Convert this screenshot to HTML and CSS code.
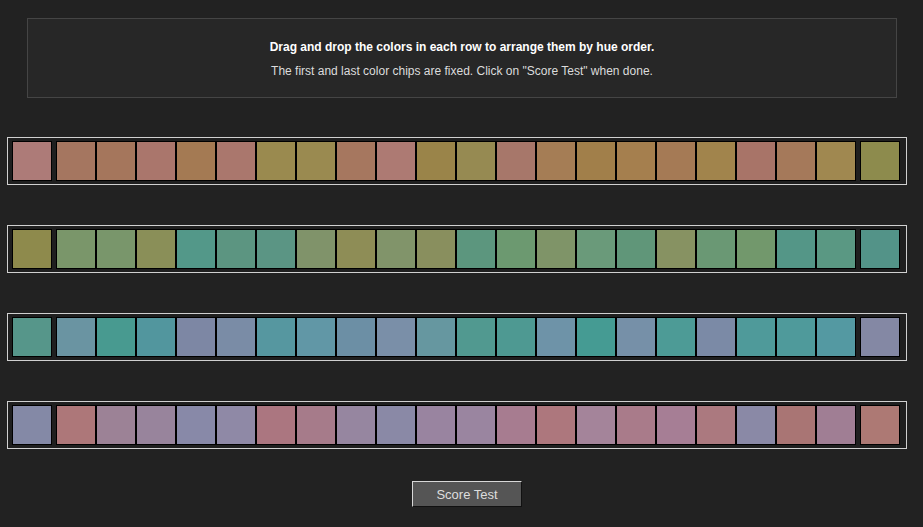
FILE: index.html
```html
<!DOCTYPE html>
<html>
<head>
<meta charset="utf-8">
<title>Hue Test</title>
<link rel="stylesheet" href="styles.css">
</head>
<body>
<div class="intro">
  <p class="lead">Drag and drop the colors in each row to arrange them by hue order.</p>
  <p class="sub">The first and last color chips are fixed. Click on "Score Test" when done.</p>
</div>
<div class="rows">
  <div class="row">
    <div class="chip" style="background:#ad7b78"></div>
    <div class="track">
      <div class="chip" style="background:#a57660"></div>
      <div class="chip" style="background:#a5765c"></div>
      <div class="chip" style="background:#aa766c"></div>
      <div class="chip" style="background:#a47a53"></div>
      <div class="chip" style="background:#aa776d"></div>
      <div class="chip" style="background:#9a8a4f"></div>
      <div class="chip" style="background:#9a8a50"></div>
      <div class="chip" style="background:#a6775f"></div>
      <div class="chip" style="background:#ad7a73"></div>
      <div class="chip" style="background:#9a8449"></div>
      <div class="chip" style="background:#968a52"></div>
      <div class="chip" style="background:#a7776a"></div>
      <div class="chip" style="background:#a57d55"></div>
      <div class="chip" style="background:#a17f4a"></div>
      <div class="chip" style="background:#a57f4e"></div>
      <div class="chip" style="background:#a57a55"></div>
      <div class="chip" style="background:#a1844c"></div>
      <div class="chip" style="background:#a87468"></div>
      <div class="chip" style="background:#a5795a"></div>
      <div class="chip" style="background:#a08850"></div>
    </div>
    <div class="chip" style="background:#8d8b4d"></div>
  </div>
  <div class="row">
    <div class="chip" style="background:#8e8a4c"></div>
    <div class="track">
      <div class="chip" style="background:#7a966a"></div>
      <div class="chip" style="background:#79966b"></div>
      <div class="chip" style="background:#8a8f58"></div>
      <div class="chip" style="background:#539889"></div>
      <div class="chip" style="background:#5c9581"></div>
      <div class="chip" style="background:#5b9584"></div>
      <div class="chip" style="background:#80936a"></div>
      <div class="chip" style="background:#8e8d56"></div>
      <div class="chip" style="background:#81946a"></div>
      <div class="chip" style="background:#898f5e"></div>
      <div class="chip" style="background:#5c967e"></div>
      <div class="chip" style="background:#6c9970"></div>
      <div class="chip" style="background:#7f9468"></div>
      <div class="chip" style="background:#6a9a7a"></div>
      <div class="chip" style="background:#609679"></div>
      <div class="chip" style="background:#879262"></div>
      <div class="chip" style="background:#6a9874"></div>
      <div class="chip" style="background:#72986c"></div>
      <div class="chip" style="background:#549687"></div>
      <div class="chip" style="background:#5a9883"></div>
    </div>
    <div class="chip" style="background:#539388"></div>
  </div>
  <div class="row">
    <div class="chip" style="background:#56968a"></div>
    <div class="track">
      <div class="chip" style="background:#6a94a2"></div>
      <div class="chip" style="background:#489a90"></div>
      <div class="chip" style="background:#52969e"></div>
      <div class="chip" style="background:#7d87a4"></div>
      <div class="chip" style="background:#7a8ca6"></div>
      <div class="chip" style="background:#5697a0"></div>
      <div class="chip" style="background:#6197a6"></div>
      <div class="chip" style="background:#6c8fa5"></div>
      <div class="chip" style="background:#7a8fa8"></div>
      <div class="chip" style="background:#6697a0"></div>
      <div class="chip" style="background:#519990"></div>
      <div class="chip" style="background:#4e9992"></div>
      <div class="chip" style="background:#6e93a8"></div>
      <div class="chip" style="background:#459b93"></div>
      <div class="chip" style="background:#7690a8"></div>
      <div class="chip" style="background:#4d9b96"></div>
      <div class="chip" style="background:#7b8aa6"></div>
      <div class="chip" style="background:#4f9a9a"></div>
      <div class="chip" style="background:#4f9a9b"></div>
      <div class="chip" style="background:#5499a2"></div>
    </div>
    <div class="chip" style="background:#8488a4"></div>
  </div>
  <div class="row">
    <div class="chip" style="background:#8489a6"></div>
    <div class="track">
      <div class="chip" style="background:#ad7779"></div>
      <div class="chip" style="background:#9c8296"></div>
      <div class="chip" style="background:#98849c"></div>
      <div class="chip" style="background:#8889a8"></div>
      <div class="chip" style="background:#8f89a6"></div>
      <div class="chip" style="background:#ab7680"></div>
      <div class="chip" style="background:#a67b8a"></div>
      <div class="chip" style="background:#9686a0"></div>
      <div class="chip" style="background:#8a89a6"></div>
      <div class="chip" style="background:#9984a0"></div>
      <div class="chip" style="background:#9a85a0"></div>
      <div class="chip" style="background:#a77c90"></div>
      <div class="chip" style="background:#ad777d"></div>
      <div class="chip" style="background:#a4849a"></div>
      <div class="chip" style="background:#a97b8a"></div>
      <div class="chip" style="background:#a67e95"></div>
      <div class="chip" style="background:#ab797f"></div>
      <div class="chip" style="background:#8a89a6"></div>
      <div class="chip" style="background:#a97574"></div>
      <div class="chip" style="background:#a07e94"></div>
    </div>
    <div class="chip" style="background:#ad7974"></div>
  </div>
</div>
<div class="actions">
  <button class="score-btn" type="button">Score Test</button>
</div>
</body>
</html>
```

FILE: styles.css
```css
html, body {
  margin: 0;
  background: #222222;
}
body {
  padding-top: 18px;
  font-family: "Liberation Sans", Arial, sans-serif;
  font-size: 12px;
}
.intro {
  margin-left: 27px;
  width: 870px;
  height: 80px;
  box-sizing: border-box;
  border: 1px solid #454545;
  background: #272727;
  padding-top: 16px;
  text-align: center;
}
.intro p {
  margin: 0;
  line-height: 24px;
}
.lead {
  font-weight: bold;
  color: #ffffff;
}
.sub {
  color: #dcdcdc;
}
.rows {
  margin: 39px 0 0 7px;
  width: 900px;
  display: flex;
  flex-direction: column;
  gap: 40px;
}
.row {
  box-sizing: border-box;
  height: 48px;
  border: 1px solid #d0d0d0;
  background: #1f1f1f;
  padding: 3px 0 0 4px;
  display: flex;
  gap: 4px;
}
.track {
  display: flex;
}
.chip {
  width: 40px;
  height: 40px;
  box-sizing: border-box;
  border: 1px solid #000000;
  flex: none;
}
.actions {
  margin: 32px 0 0 412px;
}
.score-btn {
  width: 110px;
  height: 26px;
  box-sizing: border-box;
  background: #555555;
  color: #dddddd;
  font-family: "Liberation Sans", Arial, sans-serif;
  font-size: 13px;
  border: 1px solid;
  border-color: #d8d8d8 #111111 #111111 #d8d8d8;
  padding: 0;
  cursor: pointer;
}
```
